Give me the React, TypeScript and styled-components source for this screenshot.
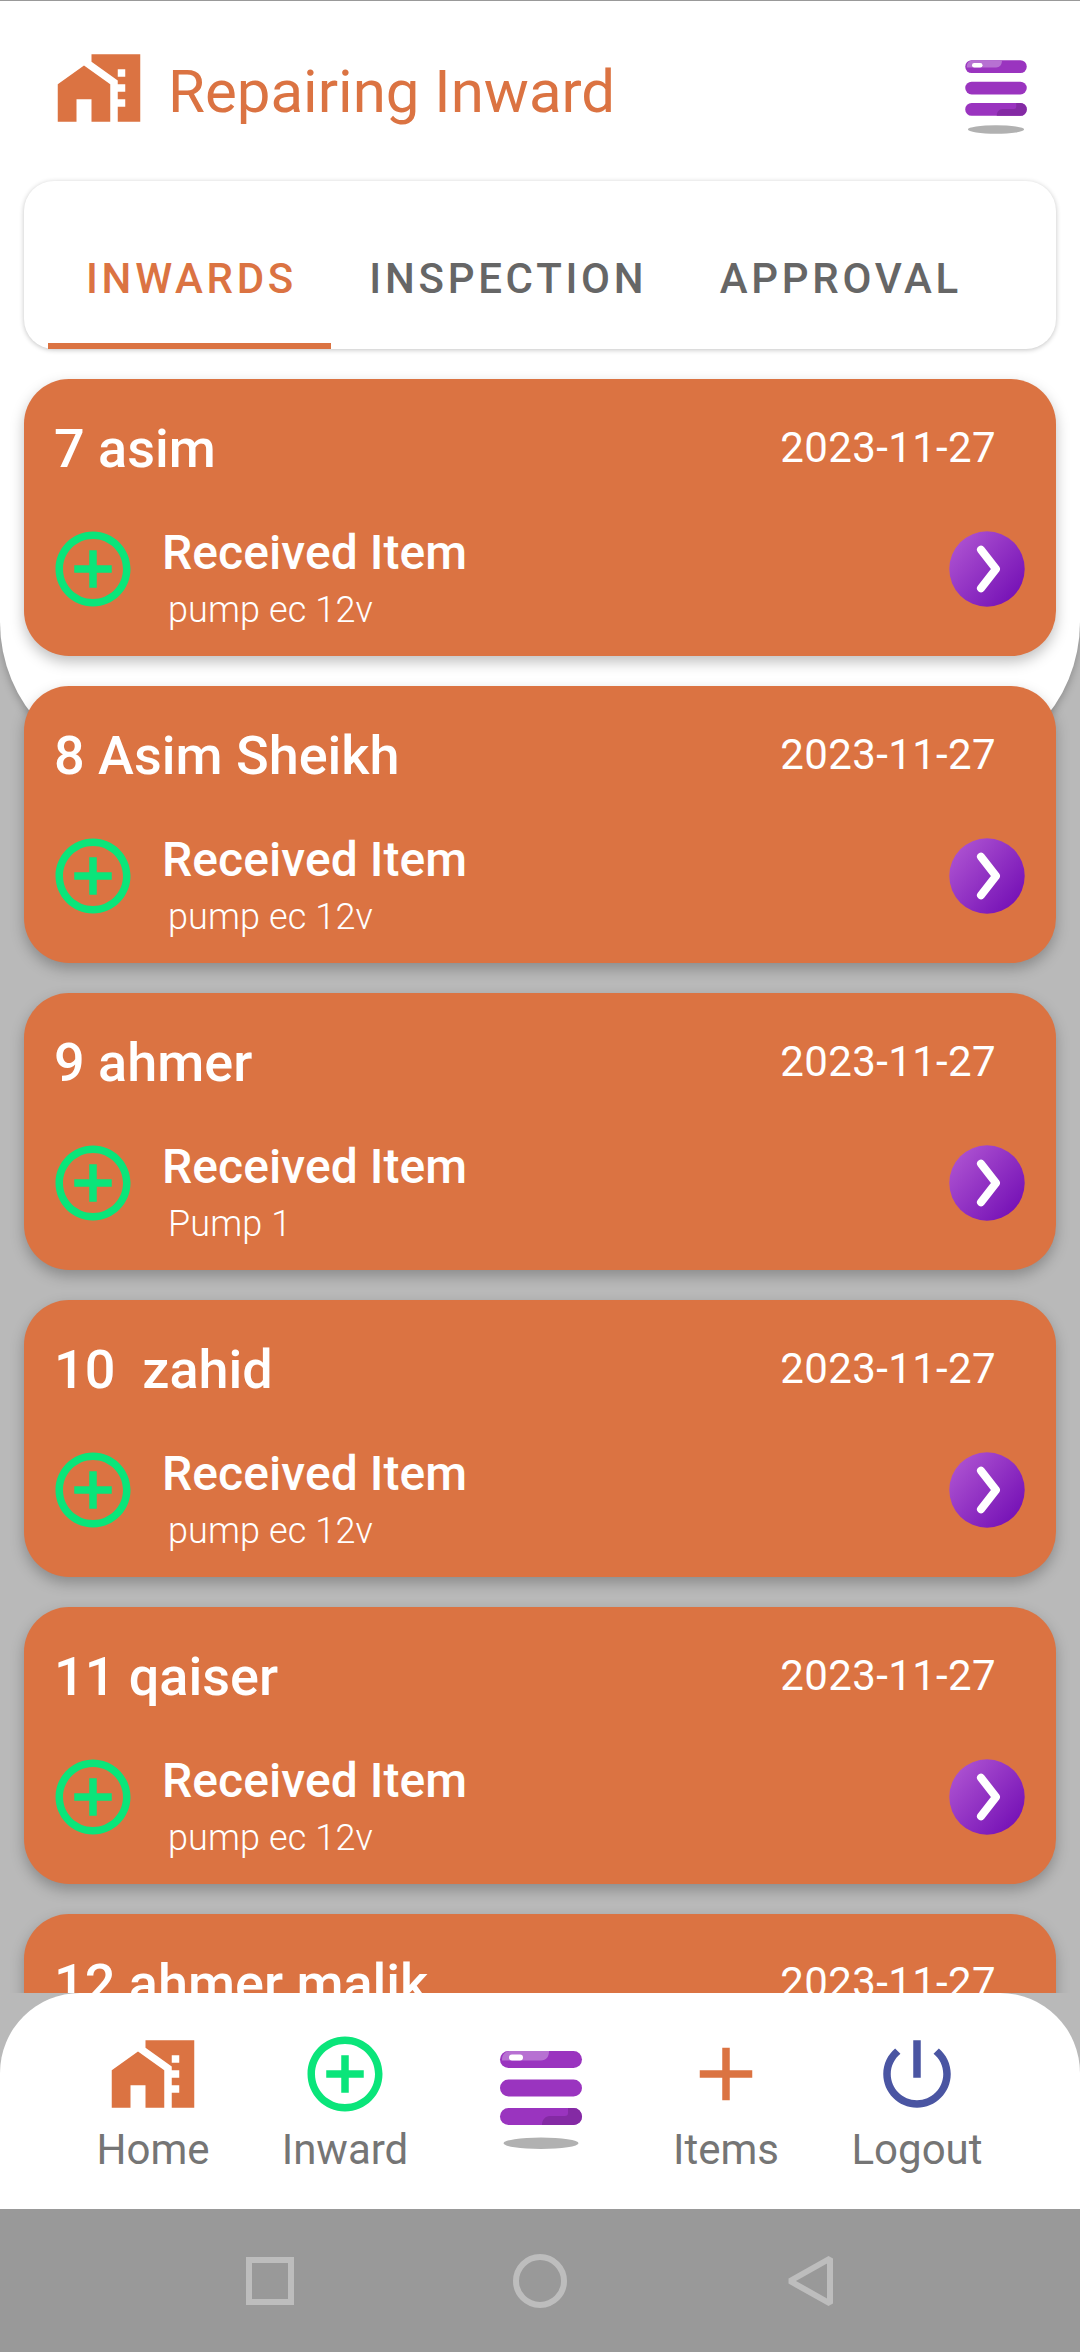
import React from "react";
import styled, { createGlobalStyle } from "styled-components";

const ORANGE = "#db7342";
const GREEN = "#0ae57a";
const INDIGO = "#4a55a2";

const GlobalStyle = createGlobalStyle`
  * { box-sizing: border-box; }
  body { margin: 0; font-family: Roboto, sans-serif; background: #b9b9b9; }
`;

const Screen = styled.div`
  width: 1080px;
  height: 2352px;
  display: flex;
  flex-direction: column;
  overflow: hidden;
  background: #b9b9b9;
`;

const Content = styled.main`
  position: relative;
  z-index: 0;
  height: 1993px;
  flex: none;
  overflow: hidden;
  display: flex;
  flex-direction: column;
`;

const Sheet = styled.div`
  position: absolute;
  z-index: -1;
  inset: 0 0 auto 0;
  height: 772px;
  background: #fff;
  border-top: 1px solid #999;
  border-radius: 0 0 150px 150px;
  box-shadow: 0 3px 8px rgba(0, 0, 0, 0.25);
`;

const Header = styled.header`
  height: 180px;
  flex: none;
  display: flex;
  align-items: flex-start;
  padding: 43px 39px 0 54px;
`;

const Title = styled.h1`
  margin: 14px 0 0 24px;
  flex: 1;
  font-size: 60px;
  line-height: 70px;
  font-weight: 400;
  color: ${ORANGE};
`;

const Glyph = styled.svg<{ $size?: number }>`
  display: block;
  flex: none;
  width: ${(p) => p.$size ?? 90}px;
  height: ${(p) => p.$size ?? 90}px;
`;

const TabBar = styled.nav`
  margin: 1px 24px 30px;
  height: 168px;
  flex: none;
  padding: 0 24px;
  display: flex;
  background: #fff;
  border-radius: 30px;
  box-shadow: 0 1px 5px rgba(0, 0, 0, 0.24);
`;

const Tab = styled.div<{ $active?: boolean }>`
  padding: 73px 34.4px 0 38px;
  font-size: 42px;
  line-height: 50px;
  font-weight: 500;
  letter-spacing: 3.72px;
  color: ${(p) => (p.$active ? ORANGE : "#666")};
  border-bottom: 6px solid ${(p) => (p.$active ? ORANGE : "transparent")};
`;

const List = styled.section`
  display: flex;
  flex-direction: column;
  gap: 30px;
  padding: 0 24px;
`;

const Card = styled.article`
  height: 277px;
  flex: none;
  padding: 38px 31px 0 30px;
  border-radius: 45px;
  background: ${ORANGE};
  color: #fff;
  box-shadow: 0 6px 14px rgba(0, 0, 0, 0.25);
`;

const CardTop = styled.div`
  display: flex;
  justify-content: space-between;
  height: 107px;
`;

const Name = styled.h2`
  margin: 0;
  font-size: 54px;
  line-height: 64px;
  font-weight: 500;
  white-space: pre;
`;

const DateText = styled.time`
  margin-right: 29px;
  font-size: 42px;
  line-height: 62px;
  letter-spacing: 0.36px;
`;

const CardBody = styled.div`
  display: flex;
  align-items: flex-start;
`;

const PlusSlot = styled.div`
  margin-left: -6px;
`;

const Details = styled.div`
  flex: 1;
  padding: 1px 0 0 24px;
`;

const ItemTitle = styled.div`
  font-size: 48px;
  line-height: 56px;
  font-weight: 500;
  letter-spacing: 0.08px;
`;

const ItemText = styled.div`
  padding-left: 6px;
  font-size: 36px;
  line-height: 58px;
  font-weight: 300;
  letter-spacing: 0.12px;
`;

const ArrowSlot = styled.div`
  padding-top: 7px;
`;

const BottomNav = styled.nav`
  height: 216px;
  flex: none;
  display: flex;
  justify-content: center;
  padding: 36px 58px 0;
  background: #fff;
  border-radius: 80px 80px 0 0;
`;

const NavItem = styled.div<{ $width: number }>`
  width: ${(p) => p.$width}px;
  display: flex;
  flex-direction: column;
  align-items: center;
  font-size: 42px;
  line-height: 62px;
  color: #757575;
`;

const MenuSlot = styled.div<{ $top: number }>`
  padding-top: ${(p) => p.$top}px;
`;

const SystemBar = styled.footer`
  height: 143px;
  flex: none;
  display: flex;
  justify-content: center;
  align-items: center;
  gap: 210px;
  background: #999;
`;

const HomeIcon = () => (
  <Glyph viewBox="0 0 24 24" fill={ORANGE}>
    <path d="M1 11v10h5v-6h4v6h5V11L8 6z" />
    <path d="M10 3v1.97l7 5V11h2v2h-2v2h2v2h-2v4h6V3H10zm9 6h-2V7h2v2z" />
  </Glyph>
);

const AddCircleIcon = () => (
  <Glyph viewBox="0 0 24 24" fill={GREEN}>
    <path d="M13 7h-2v4H7v2h4v4h2v-4h4v-2h-4V7zm-1-5C6.48 2 2 6.48 2 12s4.48 10 10 10 10-4.48 10-10S17.52 2 12 2zm0 18c-4.41 0-8-3.59-8-8s3.59-8 8-8 8 3.59 8 8-3.59 8-8 8z" />
  </Glyph>
);

const PlusIcon = () => (
  <Glyph viewBox="0 0 24 24" fill={ORANGE}>
    <path d="M19 13h-6v6h-2v-6H5v-2h6V5h2v6h6v2z" />
  </Glyph>
);

const PowerIcon = () => (
  <Glyph viewBox="0 0 24 24" fill={INDIGO}>
    <path d="M13 3h-2v10h2V3zm4.83 2.17l-1.42 1.42C17.99 7.86 19 9.81 19 12c0 3.87-3.13 7-7 7s-7-3.13-7-7c0-2.19 1.01-4.14 2.58-5.42L6.17 5.17C4.23 6.82 3 9.26 3 12c0 4.97 4.03 9 9 9s9-4.03 9-9c0-2.74-1.23-5.18-3.17-6.83z" />
  </Glyph>
);

const MenuIcon = ({ size }: { size: number }) => (
  <Glyph $size={size} viewBox="0 0 120 120">
    <rect x="19" y="11" width="82" height="17" rx="8.5" fill="#9a34bf" />
    <path d="M21 19.5C21 14 25 11 29 11H68C68 17 65 20.5 60 20.5H21Z" fill="#b771d2" />
    <rect x="28" y="14.5" width="14" height="6" rx="3" fill="#fff" />
    <rect x="19" y="39.5" width="82" height="17" rx="8.5" fill="#9a34bf" />
    <rect x="19" y="68" width="82" height="17" rx="8.5" fill="#9a34bf" />
    <path d="M61 85C61 80 64 76 69 76H84Q87 76 87 73V68H92.5A8.5 8.5 0 0 1 92.5 85Z" fill="#842aa4" />
    <ellipse cx="60" cy="103.3" rx="37.5" ry="5.7" fill="#b1b1b1" />
  </Glyph>
);

const ArrowIcon = () => (
  <Glyph $size={76} viewBox="0 0 76 76">
    <defs>
      <linearGradient id="arrowFill" x1="0.1" y1="0.15" x2="0.9" y2="0.85">
        <stop offset="0" stopColor="#ab50d0" />
        <stop offset="1" stopColor="#7612b6" />
      </linearGradient>
    </defs>
    <circle cx="38" cy="38" r="37.7" fill="url(#arrowFill)" />
    <path d="M32 18.7L47 38L32 57.3" fill="none" stroke="#fff" strokeWidth="8" strokeLinecap="round" strokeLinejoin="round" />
  </Glyph>
);

const rows = [
  { name: "7 asim", item: "pump ec 12v" },
  { name: "8 Asim Sheikh", item: "pump ec 12v" },
  { name: "9 ahmer", item: "Pump 1" },
  { name: "10  zahid", item: "pump ec 12v" },
  { name: "11 qaiser", item: "pump ec 12v" },
  { name: "12 ahmer malik", item: "pump ec 12v" },
];

export default function App() {
  return (
    <Screen>
      <GlobalStyle />
      <Content>
        <Sheet />
        <Header>
          <HomeIcon />
          <Title>Repairing Inward</Title>
          <MenuSlot $top={9}>
            <MenuIcon size={90} />
          </MenuSlot>
        </Header>
        <TabBar>
          <Tab $active>INWARDS</Tab>
          <Tab>INSPECTION</Tab>
          <Tab>APPROVAL</Tab>
        </TabBar>
        <List>
          {rows.map((row) => (
            <Card key={row.name}>
              <CardTop>
                <Name>{row.name}</Name>
                <DateText>2023-11-27</DateText>
              </CardTop>
              <CardBody>
                <PlusSlot>
                  <AddCircleIcon />
                </PlusSlot>
                <Details>
                  <ItemTitle>Received Item</ItemTitle>
                  <ItemText>{row.item}</ItemText>
                </Details>
                <ArrowSlot>
                  <ArrowIcon />
                </ArrowSlot>
              </CardBody>
            </Card>
          ))}
        </List>
      </Content>
      <BottomNav>
        <NavItem $width={190}>
          <HomeIcon />
          Home
        </NavItem>
        <NavItem $width={194}>
          <AddCircleIcon />
          Inward
        </NavItem>
        <NavItem $width={198}>
          <MenuSlot $top={11}>
            <MenuIcon size={120} />
          </MenuSlot>
        </NavItem>
        <NavItem $width={172}>
          <PlusIcon />
          Items
        </NavItem>
        <NavItem $width={210}>
          <PowerIcon />
          Logout
        </NavItem>
      </BottomNav>
      <SystemBar>
        <Glyph $size={60} viewBox="0 0 60 60" fill="none" stroke="#bdbdbd" strokeWidth="6">
          <rect x="9" y="9" width="42" height="42" />
        </Glyph>
        <Glyph $size={60} viewBox="0 0 60 60" fill="none" stroke="#bdbdbd" strokeWidth="6">
          <circle cx="30" cy="30" r="24" />
        </Glyph>
        <Glyph $size={60} viewBox="0 0 60 60" fill="none" stroke="#bdbdbd" strokeWidth="6">
          <path d="M50 7.5V52.5L10 30Z" strokeLinejoin="bevel" />
        </Glyph>
      </SystemBar>
    </Screen>
  );
}
